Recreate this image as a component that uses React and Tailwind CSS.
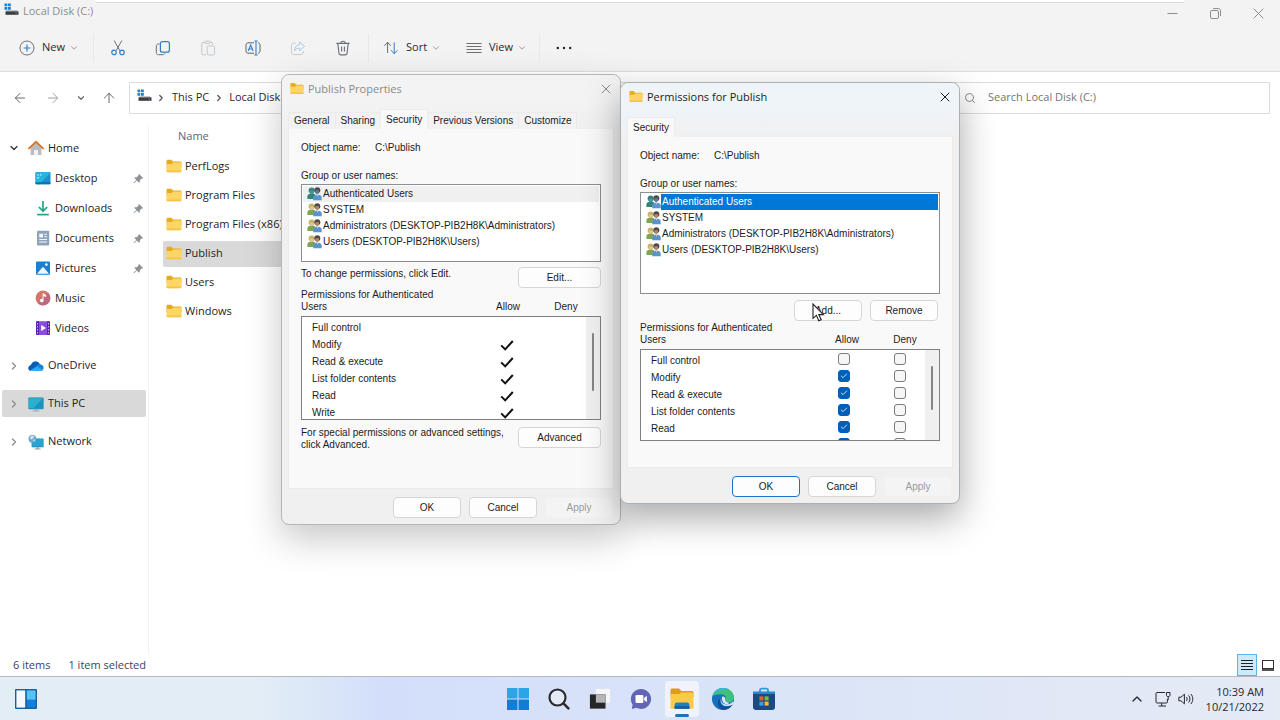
import { useState } from "react";
import clsx from "clsx";
import { ArrowLeft, ArrowRight, ArrowUp, Check, ChevronDown, ChevronRight, ChevronUp, Search, X } from "lucide-react";

const quickAccess = [
    { name: 'Desktop', icon: 'desktop', pinned: true },
    { name: 'Downloads', icon: 'downloads', pinned: true },
    { name: 'Documents', icon: 'documents', pinned: true },
    { name: 'Pictures', icon: 'pictures', pinned: true },
    { name: 'Music', icon: 'music', pinned: false },
    { name: 'Videos', icon: 'videos', pinned: false },
];

const places = [
    { name: 'OneDrive', icon: 'onedrive' },
    { name: 'This PC', icon: 'pc', selected: true },
    { name: 'Network', icon: 'network' },
];

const folders = ['PerfLogs', 'Program Files', 'Program Files (x86)', 'Publish', 'Users', 'Windows'];

const principals = [
    'Authenticated Users',
    'SYSTEM',
    'Administrators (DESKTOP-PIB2H8K\\Administrators)',
    'Users (DESKTOP-PIB2H8K\\Users)',
];

const permissions = ['Full control', 'Modify', 'Read & execute', 'List folder contents', 'Read', 'Write'];

const FolderIcon = ({ className }) => (
    <svg className={className} viewBox="0 0 16 14" fill="none">
        <path d="M0.5 2.2C0.5 1.3 1 0.8 1.9 0.8H5.3L7 2.6H14.2C15 2.6 15.5 3.1 15.5 3.9V8H0.5Z" fill="#e5ac22" />
        <path d="M0.5 5H5.6L7.4 3.6H14.3C15.1 3.6 15.5 4.1 15.5 4.8V12.1C15.5 12.8 15.1 13.2 14.4 13.2H1.6C0.9 13.2 0.5 12.8 0.5 12.1Z" fill="#fdd664" />
        <path d="M0.5 11.5V12.1C0.5 12.8 0.9 13.2 1.6 13.2H14.4C15.1 13.2 15.5 12.8 15.5 12.1V11.5Z" fill="#f6c445" />
    </svg>
);

const DriveIcon = ({ className }) => (
    <svg className={className} viewBox="0 0 15 13">
        <path d="M0.5 0.5H3.3V3.3H0.5ZM4 0.5H6.8V3.3H4ZM0.5 4H3.3V6.8H0.5ZM4 4H6.8V6.8H4Z" fill="#1583d8" />
        <path d="M2 8L3 7.4H13L14.2 8.6H2Z" fill="#8b8f93" />
        <rect x="1.5" y="8.4" width="13" height="3.4" fill="#3b3d40" />
        <rect x="11.5" y="9.6" width="1.6" height="1" fill="#7d8a80" />
    </svg>
);

const PinIcon = ({ className }) => (
    <svg className={className} viewBox="0 0 12 12">
        <path d="M6.6 1L11 5.4L10 6.2L9.3 6L7.5 7.9L7.4 9.9L6.6 10.5L4.2 8.1L1.2 11.1L0.6 10.7L3.6 7.5L1.4 5.3L2.1 4.6L4.1 4.5L6 2.7L5.8 1.8Z" fill="#8e9297" />
    </svg>
);

const UsersIcon = ({ className, teal }) => (
    <svg className={className} viewBox="0 0 15 14">
        <circle cx="4.6" cy="3.4" r="3" fill={teal ? '#3d7f86' : '#c9b268'} />
        <path d="M3.2 3.8H6.6V7H3.2Z" fill={teal ? '#4f9a9a' : '#e0c8a0'} />
        <path d="M0.4 12V9.6C0.4 7.7 1.6 6.7 3.8 6.7H5.8C7.8 6.7 8.8 8 8.8 9.6V12Z" fill={teal ? '#2f8577' : '#7da650'} />
        <circle cx="10.3" cy="3.2" r="3" fill="#4c4a4d" />
        <path d="M8.3 3.2H12L11.7 6.2L10.3 7.6L8.7 6.4Z" fill={teal ? '#5f7f96' : '#b98b64'} />
        <path d="M6.2 13.3V10.8C6.2 8.8 7.5 7.7 9.3 7.7H11.5C13.6 7.7 14.7 9 14.7 10.8V13.3Z" fill="#5b93cb" />
        <path d="M9.4 7.7H11.4L10.4 9.6Z" fill="#bcd5ee" />
    </svg>
);

const PlaceIcon = ({ kind, className }) => {
    const art = {
        home: (
            <>
                <path d="M2.6 7L8 2.6L13.4 7V15H9.8V10H6.4V15H2.6Z" fill="#b9bcc0" />
                <path d="M6.4 10H9.8V15H6.4Z" fill="#f4f4f4" />
                <path d="M1 8.4L8 1.8L15 8.4" fill="none" stroke="#d9772e" strokeWidth="1.9" strokeLinecap="round" strokeLinejoin="round" />
            </>
        ),
        desktop: (
            <>
                <rect x="0.5" y="2" width="15" height="12.2" rx="1" fill="#1b8fd0" />
                <path d="M0.5 3Q0.5 2 1.5 2H14.5Q15.5 2 15.5 3L4 14.2H1.5Q0.5 14.2 0.5 13.2Z" fill="#2ab4dc" />
                <path d="M2.4 4.2H3.8V5.6H2.4ZM2.4 7H3.8V8.4H2.4ZM5 4.2H6.4V5.6H5Z" fill="#d7f4fb" />
                <path d="M0.5 12.2H15.5V13.2Q15.5 14.2 14.5 14.2H1.5Q0.5 14.2 0.5 13.2Z" fill="#126da8" />
            </>
        ),
        downloads: (
            <>
                <path d="M8 1V11M3.8 7L8 11.2L12.2 7" fill="none" stroke="#22a686" strokeWidth="1.7" />
                <path d="M2.2 14.6H13.8" stroke="#22a686" strokeWidth="1.7" />
            </>
        ),
        documents: (
            <>
                <rect x="2" y="0.8" width="12.2" height="14.6" rx="1" fill="#8ea3ba" />
                <path d="M4.2 3.8H8V7.4H4.2ZM9.2 3.8H12V4.8H9.2ZM9.2 6.2H12V7.2H9.2ZM4.2 9H12V10H4.2ZM4.2 11.6H12V12.6H4.2Z" fill="#f3f7fb" />
            </>
        ),
        pictures: (
            <>
                <rect x="1" y="1.4" width="14" height="13.4" rx="1" fill="#1c7fd0" />
                <path d="M2 13.8L7.5 7.2Q8 6.7 8.5 7.2L14 13.8Z" fill="#f2f8fe" />
                <circle cx="11.4" cy="4.6" r="1.3" fill="#f2f8fe" />
            </>
        ),
        music: (
            <>
                <circle cx="8" cy="8" r="7.4" fill="#d5766a" />
                <path d="M15.4 8A7.4 7.4 0 0 1 2.8 13.2L13.2 2.8A7.4 7.4 0 0 1 15.4 8Z" fill="#b5648c" opacity="0.7" />
                <circle cx="6.8" cy="10.6" r="1.8" fill="#fff" />
                <path d="M8 10.6V3.6L10.8 5.2V6.6L8.6 5.6" fill="#fff" stroke="#fff" strokeWidth="0.7" />
            </>
        ),
        videos: (
            <>
                <rect x="1" y="1.2" width="14" height="13.8" rx="1" fill="#8a4be0" />
                <path d="M1 2.2Q1 1.2 2 1.2H4V15H2Q1 15 1 14ZM12 1.2H14Q15 1.2 15 2.2V14Q15 15 14 15H12Z" fill="#5b25b0" />
                <path d="M2 3H3V4.4H2ZM2 6H3V7.4H2ZM2 9H3V10.4H2ZM2 12H3V13.4H2ZM13 3H14V4.4H13ZM13 6H14V7.4H13ZM13 9H14V10.4H13ZM13 12H14V13.4H13Z" fill="#c9a8f5" />
                <path d="M6.2 5L11 8L6.2 11Z" fill="#fff" />
            </>
        ),
        onedrive: (
            <>
                <path d="M3.5 13C1.6 13 0.4 11.8 0.4 10.2C0.4 8.6 1.6 7.4 3 7.2C3.6 4.9 5.4 3.4 7.6 3.4C9.5 3.4 11 4.5 11.8 6.2C14 6.3 15.6 7.8 15.6 9.8C15.6 11.6 14.2 13 12.4 13Z" fill="#1683dc" />
                <path d="M3 7.2C3.6 4.9 5.4 3.4 7.6 3.4C9.5 3.4 11 4.5 11.8 6.2C10 6.2 9.2 7 8.6 7.8L2 12.6C1 12 0.4 11.2 0.4 10.2C0.4 8.6 1.6 7.4 3 7.2Z" fill="#0b5cb5" />
                <path d="M2 12.6L9.4 8.4L14.8 11.9C14.2 12.6 13.4 13 12.4 13H3.5C3 13 2.4 12.9 2 12.6Z" fill="#35a8ee" />
            </>
        ),
        pc: (
            <>
                <rect x="0.4" y="1.6" width="15.2" height="11.6" rx="0.8" fill="#1c86a8" />
                <path d="M1 2.2H15V12.6H1Z" fill="#2bb0d0" />
                <path d="M15 2.2V12.6H5Z" fill="#1993bd" />
                <path d="M6.4 13.2H9.6V14.6H11.4V15.4H4.6V14.6H6.4Z" fill="#9fb2bd" />
            </>
        ),
        network: (
            <>
                <rect x="3.6" y="4.4" width="12" height="8.8" rx="0.6" fill="#1c86b0" />
                <path d="M4.2 5H15V12.6H4.2Z" fill="#29a3d2" />
                <path d="M8.4 13.2H10.8V14.6H12.6V15.4H6.6V14.6H8.4Z" fill="#8ea6b4" />
                <circle cx="4.4" cy="4.8" r="3.9" fill="#6aa8cc" />
                <path d="M2 3.4L4 1.6L6.2 2.6L5 4.6L3 5.4ZM4.6 6L7 5.2L6.4 7.6Z" fill="#d5e9f3" />
            </>
        ),
    };

    return <svg className={className} viewBox="0 0 16 16">{art[kind]}</svg>;
};

const ToolIcon = ({ kind }) => {
    const art = {
        cut: (
            <>
                <path d="M4.2 0.6L9.9 10.8M11.8 0.6L6.1 10.8" stroke="#6b6f74" />
                <circle cx="4" cy="12.4" r="2.2" stroke="#2f7fd0" strokeWidth="1.2" />
                <circle cx="12" cy="12.4" r="2.2" stroke="#2f7fd0" strokeWidth="1.2" />
            </>
        ),
        copy: (
            <>
                <path d="M4.6 4H3.4C2.2 4 1.3 4.9 1.3 6V12.6C1.3 13.8 2.2 14.7 3.4 14.7H7.8C8.8 14.7 9.6 14.2 9.9 13.2" stroke="#6b6f74" />
                <rect x="5.4" y="1.6" width="9" height="10.6" rx="2" stroke="#2f7fd0" strokeWidth="1.2" />
            </>
        ),
        paste: (
            <>
                <path d="M5 2.4H3C2.3 2.4 1.8 2.9 1.8 3.6V13.6C1.8 14.3 2.3 14.8 3 14.8H6M10 2.4H11.4C12.1 2.4 12.6 2.9 12.6 3.6V5" stroke="#c3c5c7" />
                <rect x="5" y="1.2" width="5" height="2.4" rx="1" stroke="#c3c5c7" />
                <rect x="7.2" y="6" width="7.4" height="9" rx="1.2" stroke="#b8cbdc" />
            </>
        ),
        rename: (
            <>
                <path d="M9 2.8H3C1.9 2.8 1 3.7 1 4.8V11.2C1 12.3 1.9 13.2 3 13.2H9M13 2.8C14.2 2.8 15 3.7 15 4.8V11.2C15 12.3 14.2 13.2 13 13.2" stroke="#5f6368" />
                <path d="M11 1V15M9.4 1H12.6M9.4 15H12.6M3.2 11L5.7 5L8.2 11M4.1 9H7.3" stroke="#2f7fd0" strokeWidth="1.1" />
            </>
        ),
        share: (
            <>
                <path d="M6 3H3.6C2.3 3 1.4 3.9 1.4 5.2V12.4C1.4 13.7 2.3 14.6 3.6 14.6H11C12.3 14.6 13.2 13.7 13.2 12.4V11" stroke="#c6cacd" />
                <path d="M9.6 2L14.6 6.4L9.6 10.6V8.2C7 8.2 5.4 9.2 4.4 11C4.6 7.4 6.4 5 9.6 4.6Z" stroke="#a9c9e4" />
            </>
        ),
        trash: (
            <path d="M1.4 3.4H14.6M5.8 3.2C5.8 2 6.7 1.2 8 1.2C9.3 1.2 10.2 2 10.2 3.2M2.8 3.6L4 13.4C4.1 14.3 4.8 14.9 5.7 14.9H10.3C11.2 14.9 11.9 14.3 12 13.4L13.2 3.6M6.6 6.6V11.6M9.4 6.6V11.6" stroke="#6b6f74" strokeWidth="1.1" />
        ),
        sort: (
            <>
                <path d="M4.6 13V2.4M1.4 5.8L4.6 2.2L7.8 5.8" stroke="#6b6f74" />
                <path d="M11.2 2.4V13.4M8 10.2L11.2 13.8L14.4 10.2" stroke="#2f7fd0" />
            </>
        ),
        view: <path d="M0.5 3.5H15.5M0.5 6.5H15.5M0.5 9.5H15.5M0.5 12.5H15.5" stroke="#6b6f74" />,
        add: (
            <>
                <circle cx="8" cy="8" r="7" stroke="#6b6f74" />
                <path d="M8 4.6V11.4M4.6 8H11.4" stroke="#2f7fd0" strokeWidth="1.2" />
            </>
        ),
        more: (
            <>
                <circle cx="1.8" cy="8" r="1.2" fill="#222" />
                <circle cx="8" cy="8" r="1.2" fill="#222" />
                <circle cx="14.2" cy="8" r="1.2" fill="#222" />
            </>
        ),
    };

    return <svg className="size-4 shrink-0" viewBox="0 0 16 16" fill="none">{art[kind]}</svg>;
};

const TitleBar = () => (
    <div className="relative flex h-6 items-start justify-between text-[#8d8d8d]">
        <div className="absolute left-24 right-24 top-0 h-[3px] border-b border-[#dcdcdc] bg-white" />
        <div className="flex items-center gap-1 pl-1 pt-[2px]">
            <DriveIcon className="mb-1 h-[13px] w-[15px]" />
            <span className="text-[11px] leading-[18px]">Local Disk (C:)</span>
        </div>
        <div className="relative flex">
            <button aria-label="Minimize" className="flex h-[27px] w-[43px] items-center justify-center">
                <svg className="size-[11px]" viewBox="0 0 11 11"><path d="M0.5 5.5H10.5" stroke="#8d8d8d" /></svg>
            </button>
            <button aria-label="Restore" className="flex h-[27px] w-[43px] items-center justify-center">
                <svg className="size-[11px]" viewBox="0 0 11 11" fill="none" stroke="#8d8d8d">
                    <rect x="0.5" y="2.5" width="8" height="8" rx="1.5" />
                    <path d="M3 0.6H8.4C9.7 0.6 10.5 1.4 10.5 2.6V8" />
                </svg>
            </button>
            <button aria-label="Close" className="flex h-[27px] w-[43px] items-center justify-center">
                <svg className="size-[11px]" viewBox="0 0 11 11"><path d="M0.7 0.7L10.3 10.3M10.3 0.7L0.7 10.3" stroke="#8d8d8d" /></svg>
            </button>
        </div>
    </div>
);

const MenuButton = ({ icon, label, className }) => (
    <button className={clsx('flex items-center text-[11px] text-[#2a2a2a]', className)}>
        <ToolIcon kind={icon} />
        <span className="ml-[7px] mr-1">{label}</span>
        <ChevronDown className="size-[10px] text-[#8a8a8a]" />
    </button>
);

const Toolbar = () => (
    <div className="flex h-12 items-center border-b border-[#dedede]">
        <MenuButton icon="add" label="New" className="w-[93px] pl-[19px]" />
        <div className="mr-px h-7 w-px bg-[#e8e8e8]" />
        {
            ['cut', 'copy', 'paste', 'rename', 'share', 'trash'].map(kind => (
                <button key={kind} aria-label={kind} className="flex w-[45px] justify-center">
                    <ToolIcon kind={kind} />
                </button>
            ))
        }
        <div className="ml-[3px] h-7 w-px bg-[#e8e8e8]" />
        <MenuButton icon="sort" label="Sort" className="w-[83px] pl-[14px]" />
        <MenuButton icon="view" label="View" className="w-[87px] pl-[14px]" />
        <div className="h-7 w-px bg-[#e8e8e8]" />
        <button aria-label="more" className="ml-4">
            <ToolIcon kind="more" />
        </button>
    </div>
);

const AddressRow = () => (
    <div className="flex h-[51px] items-center bg-white pr-[10px]">
        <div className="flex w-[129px] items-center pl-3 text-[#6a6a6a]">
            <button aria-label="Back" className="mr-[17px]"><ArrowLeft className="size-4" strokeWidth={1.5} /></button>
            <button aria-label="Forward" className="mr-[15px] text-[#a3a3a3]"><ArrowRight className="size-4" strokeWidth={1.5} /></button>
            <button aria-label="Recent" className="mr-[15px]"><ChevronDown className="size-[10px]" strokeWidth={3} /></button>
            <button aria-label="Up"><ArrowUp className="size-4" strokeWidth={1.5} /></button>
        </div>
        <div className="flex h-8 flex-1 items-center border border-[#dddddd] pl-[7px] text-[11px] text-[#2a2a2a]">
            <DriveIcon className="mb-1 h-[13px] w-[15px]" />
            <ChevronRight className="mx-1 size-[10px] text-[#555]" strokeWidth={3} />
            <a href="#pc" className="ml-[2px]">This PC</a>
            <ChevronRight className="mx-[5px] size-[10px] text-[#555]" strokeWidth={3} />
            <a href="#c">Local Disk (C:)</a>
        </div>
        <label className="ml-2 flex h-8 w-[320px] items-center border border-[#dddddd] pl-[13px]">
            <Search className="size-3 text-[#8a8a8a]" />
            <input type="search" aria-label="Search Local Disk (C:)" placeholder="Search Local Disk (C:)" className="ml-3 flex-1 bg-transparent text-[11px] outline-none placeholder:text-[#757575]" />
        </label>
    </div>
);

const Sidebar = () => (
    <nav className="mt-[2px] w-[149px] border-r border-[#f2f2f2] pt-2 text-[11px] text-[#1e1e1e]">
        <a href="#home" className="flex h-[30px] items-center pl-2">
            <ChevronDown className="size-3 text-[#333]" strokeWidth={2.5} />
            <PlaceIcon kind="home" className="ml-2 size-4" />
            <span className="ml-1">Home</span>
        </a>
        {
            quickAccess.map(item => (
                <a href={`#${item.icon}`} key={item.name} className="flex h-[30px] items-center pl-[35px] pr-1">
                    <PlaceIcon kind={item.icon} className="size-4" />
                    <span className="ml-1 flex-1">{item.name}</span>
                    {item.pinned && <PinIcon className="size-[11px]" />}
                </a>
            ))
        }
        <div className="mt-[9px] flex flex-col gap-[11px]">
            {
                places.map(item => (
                    <a href={`#${item.icon}`} key={item.name} className={clsx('ml-[2px] mr-[2px] flex h-[27px] items-center rounded-xs pl-[6px]', item.selected && 'bg-[#d9d9d9]')}>
                        <ChevronRight className="size-3 text-[#8a8a8a]" strokeWidth={2.5} />
                        <PlaceIcon kind={item.icon} className="ml-2 size-4" />
                        <span className="ml-1">{item.name}</span>
                    </a>
                ))
            }
        </div>
    </nav>
);

const FileList = () => (
    <div className="flex-1 pl-[14px]">
        <table className="w-[600px] text-left text-[11px] text-[#1e1e1e]">
            <thead>
                <tr>
                    <th className="h-[29px] pb-[3px] pl-[15px] font-normal text-[#5a6480]">Name</th>
                </tr>
            </thead>
            <tbody>
                {
                    folders.map(name => (
                        <tr key={name}>
                            <td className="h-[29px] p-0">
                                <div className={clsx('flex h-[26px] items-center rounded-xs pl-[3px]', name === 'Publish' && 'bg-[#d9d9d9]')}>
                                    <FolderIcon className="mb-[2px] h-[14px] w-4" />
                                    <span className="ml-[3px]">{name}</span>
                                </div>
                            </td>
                        </tr>
                    ))
                }
            </tbody>
        </table>
    </div>
);

const StatusBar = () => (
    <div className="flex h-[22px] items-center pl-[13px] pr-px text-[11px] text-[#3c4460]">
        <span>6 items</span>
        <span className="ml-[18px] flex-1">1 item selected</span>
        <button aria-label="Details" className="flex h-[22px] w-5 items-center justify-center border border-[#5fb4e6] bg-[#cfe9f8]">
            <svg className="h-[10px] w-3" viewBox="0 0 12 10"><path d="M0 0.5H12M0 3.5H12M0 6.5H12M0 9.5H12" stroke="#222" /></svg>
        </button>
        <button aria-label="Large icons" className="flex h-[22px] w-[22px] items-center justify-center">
            <svg className="h-[11px] w-3" viewBox="0 0 12 11" fill="none">
                <rect x="0.5" y="0.5" width="11" height="8" stroke="#333" />
                <path d="M0 10H12" stroke="#555" strokeWidth="2" />
            </svg>
        </button>
    </div>
);

const WindowFrame = ({ title, active, tabs, selectedTab, className, children, footer }) => (
    <section className={clsx('absolute flex w-[340px] flex-col rounded-lg border bg-[#f0f0f0] font-["Liberation_Sans",sans-serif] text-[10px] leading-3 text-[#1c1c1c]', active ? 'border-[#a9b0b6] shadow-[0_14px_36px_rgba(0,0,0,0.34)]' : 'border-[#b5b5b5] shadow-[0_14px_36px_rgba(0,0,0,0.22)]', className)}>
        <header className={clsx('flex h-7 items-center rounded-t-lg pl-2 font-["Open_Sans",sans-serif]', active ? 'bg-[#eff4f9] text-[#1c1c1c]' : 'bg-[#f3f3f3] text-[#8a8a8a]')}>
            <FolderIcon className="mb-[2px] h-[13px] w-[14px]" />
            <h2 className="ml-1 flex-1 text-[11px] leading-4">{title}</h2>
            <button aria-label="Close" className="flex size-7 items-center justify-center">
                <X className="size-4" strokeWidth={1.5} />
            </button>
        </header>
        <div className={clsx('flex h-[26px] items-end px-[6px]', active ? 'bg-linear-to-b from-[#eff4f9] to-[#f0f0f0]' : 'bg-linear-to-b from-[#f3f3f3] to-[#f0f0f0]')}>
            {
                tabs.map(tab => (
                    <button key={tab} className={clsx('-mr-px border border-b-0 px-[5px]', tab === selectedTab ? 'relative h-5 border-[#ececec] bg-[#f9f9f9]' : 'h-[17px] border-[#ebebeb] bg-[#f2f2f2]')}>
                        {tab}
                    </button>
                ))
            }
        </div>
        <div className="mx-[6px] flex-1 border border-t-0 border-[#ebebeb] bg-[#f9f9f9] px-3 pb-[26px] pt-[13px]">
            {children}
        </div>
        <footer className="flex justify-end gap-2 pb-[6px] pr-[7px] pt-2">{footer}</footer>
    </section>
);

const DialogButton = ({ children, wide, primary, disabled }) => (
    <button
        disabled={disabled}
        className={clsx('h-[21px] shrink-0 rounded-sm border', wide ? 'w-[83px]' : 'w-[68px]', primary ? 'border-[#1a76c4] bg-[#fdfdfd]' : disabled ? 'border-[#f0f0f0] bg-[#f4f4f4] text-[#9b9b9b]' : 'border-[#d6d6d6] bg-[#fdfdfd]')}
    >
        {children}
    </button>
);

const ObjectName = () => (
    <div className="flex">
        <span className="w-[74px]">Object name:</span>
        <span>C:\Publish</span>
    </div>
);

const PrincipalList = ({ active, className }) => (
    <>
        <div className="mt-4">Group or user names:</div>
        <ul className={clsx('mt-[2px] border border-[#8a8f94] bg-white px-px pt-px', className)}>
            {
                principals.map((name, index) => (
                    <li key={name} className={clsx('flex h-4 items-center pl-1', index === 0 && !active && 'bg-[#f0f0f0]')}>
                        <UsersIcon className="h-[14px] w-[15px]" teal={index === 0} />
                        <span className={clsx('h-4 flex-1 pl-px leading-4', index === 0 && active && 'bg-[#0078d7] text-white')}>{name}</span>
                    </li>
                ))
            }
        </ul>
    </>
);

const PermissionHeader = () => (
    <div className="mt-px flex items-end">
        <span className="w-[178px] pr-8">Permissions for Authenticated Users</span>
        <span className="w-[58px] text-center">Allow</span>
        <span className="w-[58px] text-center">Deny</span>
    </div>
);

const PermissionBox = ({ className, thumb, children }) => (
    <div className={clsx('mt-[3px] flex overflow-hidden border border-[#7d8185] bg-white', className)}>
        <table className="h-fit w-[284px] table-fixed">
            <tbody>
                <tr className="h-[2px]">
                    <td className="w-[175px]" />
                    <td className="w-14" />
                    <td />
                </tr>
                {children}
            </tbody>
        </table>
        <div className="flex flex-1 justify-center bg-[#f0f0f0] pt-4">
            <div className={clsx('w-[2px] rounded-full bg-[#858585]', thumb)} />
        </div>
    </div>
);

const PermCheckbox = ({ row, column, defaultChecked }) => {
    const [checked, setChecked] = useState(defaultChecked);

    return (
        <label className="relative mx-auto block size-3">
            <input
                type="checkbox"
                aria-label={`${row} ${column}`}
                checked={checked}
                onChange={() => setChecked(!checked)}
                className="block size-3 appearance-none rounded-[3px] border border-[#7b7b7b] bg-[#f6f6f6] checked:border-[#005fb8] checked:bg-[#005fb8]"
            />
            {checked && <Check className="pointer-events-none absolute left-[2px] top-[2px] size-2 text-[#cfe2f4]" strokeWidth={3} />}
        </label>
    );
};

const PropertiesDialog = () => (
    <WindowFrame
        title="Publish Properties"
        tabs={['General', 'Sharing', 'Security', 'Previous Versions', 'Customize']}
        selectedTab="Security"
        className="left-[281px] top-[74px]"
        footer={
            <>
                <DialogButton>OK</DialogButton>
                <DialogButton>Cancel</DialogButton>
                <DialogButton disabled>Apply</DialogButton>
            </>
        }
    >
        <ObjectName />
        <PrincipalList className="h-[78px]" />
        <div className="mt-[5px] flex justify-between">
            <span className="pt-px">To change permissions, click Edit.</span>
            <DialogButton wide>Edit...</DialogButton>
        </div>
        <PermissionHeader />
        <PermissionBox className="h-[104px]" thumb="h-[58px]">
            {
                permissions.map((name, index) => (
                    <tr key={name} className="h-[17px]">
                        <td className="p-0 pl-[10px]">{name}</td>
                        <td className="p-0 pl-[3px]">
                            {index > 0 && (
                                <svg className="mx-auto mt-[2px] h-[11px] w-[14px]" viewBox="0 0 14 11" fill="none">
                                    <path d="M1.2 5.4L5.2 9.4L12.8 1" stroke="#111" strokeWidth="2" />
                                </svg>
                            )}
                        </td>
                        <td className="p-0" />
                    </tr>
                ))
            }
        </PermissionBox>
        <div className="mt-[7px] flex justify-between pb-[11px]">
            <span className="w-[206px]">For special permissions or advanced settings, click Advanced.</span>
            <DialogButton wide>Advanced</DialogButton>
        </div>
    </WindowFrame>
);

const PermissionsDialog = () => (
    <WindowFrame
        title="Permissions for Publish"
        active
        tabs={['Security']}
        selectedTab="Security"
        className="left-[620px] top-[82px]"
        footer={
            <>
                <DialogButton primary>OK</DialogButton>
                <DialogButton>Cancel</DialogButton>
                <DialogButton disabled>Apply</DialogButton>
            </>
        }
    >
        <ObjectName />
        <PrincipalList active className="h-[102px]" />
        <div className="mt-[6px] flex justify-end gap-2 pr-[2px]">
            <DialogButton>Add...</DialogButton>
            <DialogButton>Remove</DialogButton>
        </div>
        <PermissionHeader />
        <PermissionBox className="h-[92px]" thumb="h-[44px]">
            {
                permissions.map((name, index) => (
                    <tr key={name} className="h-[17px]">
                        <td className="p-0 pl-[10px]">{index < 5 && name}</td>
                        <td className="p-0 pb-[3px]"><PermCheckbox row={name} column="Allow" defaultChecked={index > 0} /></td>
                        <td className="p-0 pb-[3px] pl-[3px]"><PermCheckbox row={name} column="Deny" defaultChecked={false} /></td>
                    </tr>
                ))
            }
        </PermissionBox>
    </WindowFrame>
);

const Cursor = () => (
    <svg className="pointer-events-none absolute left-[812px] top-[303px] h-[19px] w-[13px]" viewBox="0 0 13 19">
        <path d="M1 1V15.4L4.4 12.4L6.8 17.8L9.2 16.8L6.8 11.6H11.4Z" fill="#fff" stroke="#222" strokeWidth="1.1" />
    </svg>
);

const taskIcons = {
    Start: (
        <>
            <path d="M1 1H11.5V11.5H1ZM12.5 1H23V11.5H12.5Z" fill="#2aa5e8" />
            <path d="M1 12.5H11.5V23H1ZM12.5 12.5H23V23H12.5Z" fill="#0f7fd3" />
        </>
    ),
    Search: (
        <>
            <circle cx="10.5" cy="10.5" r="8" fill="#e4eaf6" stroke="#2b2b2e" strokeWidth="2.2" />
            <path d="M16.4 16.4L21.4 21.4" stroke="#2b2b2e" strokeWidth="2.6" strokeLinecap="round" />
        </>
    ),
    'Task view': (
        <>
            <rect x="7.5" y="1" width="15.5" height="15" fill="#f6f6f6" />
            <rect x="1" y="7" width="17" height="15.5" fill="#262729" />
            <path d="M7.5 7H18V16H7.5Z" fill="#b5b6b8" />
        </>
    ),
    Chat: (
        <>
            <path d="M12 1.2C18 1.2 23 6 23 12C23 18 18 22.8 12 22.8C10.2 22.8 8.5 22.4 7 21.6L2 22.8L2.8 18C1.6 16.2 1 14.2 1 12C1 6 6 1.2 12 1.2Z" fill="#6264b5" />
            <rect x="6" y="7.6" width="8.6" height="8.8" rx="1.4" fill="#fff" />
            <path d="M15.4 10.8L18.4 8.4V15.6L15.4 13.2Z" fill="#fff" />
        </>
    ),
    'File Explorer': (
        <>
            <path d="M0.5 3Q0.5 1.6 2 1.6H9L11.4 4H22Q23.5 4 23.5 5.5V10H0.5Z" fill="#dd9c1c" />
            <path d="M0.5 7H9.4L11.4 5.4H22Q23.5 5.4 23.5 7V21.8H0.5Z" fill="#fccb45" />
            <path d="M4.6 21.8V18Q4.6 15.6 7 15.6H17Q19.4 15.6 19.4 18V21.8Z" fill="#1c7fc9" />
            <path d="M4.6 19H19.4V21.8H4.6Z" fill="#1262a3" />
        </>
    ),
    Edge: (
        <>
            <circle cx="12" cy="12" r="11" fill="#1670bd" />
            <path d="M1.4 9.6C2.4 4.6 6.6 1 12 1C18.4 1 23 5.6 23 10.6C23 13.6 20.8 15.6 18 15.6C15.6 15.6 14 14.6 14.6 13.4C16.4 10 13.4 7.2 9.8 7.2C6 7.2 3 8 1.4 9.6Z" fill="#3fc07c" />
            <path d="M1.4 9.6C2.4 4.6 6.6 1 12 1C14 1 16 1.5 17.6 2.4C12 1.8 4 4 1.4 9.6Z" fill="#35b8dc" />
            <path d="M9.4 11.4C8 15 10.4 19.6 15.4 19.6C18 19.6 20 19 21.4 17.8C19.4 21.2 16 23 12.4 23C8.4 22 6.4 18.4 6.8 15.4C7 13.4 8 12 9.4 11.4Z" fill="#134f96" />
            <path d="M10.6 10.4C9 13.6 11 17.4 15.4 17.4C18 17.4 20.4 16.6 22 14.6L22.8 16.4C20.6 18.6 17 19.2 15 19C10.6 18.6 8.2 14 10.6 10.4Z" fill="#e2e5f4" />
            <path d="M11.2 9.6C13 9.2 15 10.6 14.4 13.6C14.4 15 16 16 18.6 15.8L16 17.4C12 17 10.4 13.4 11.2 9.6Z" fill="#e2e5f4" />
        </>
    ),
    Store: (
        <>
            <path d="M8 5V3.2Q8 1.6 9.6 1.6H14.4Q16 1.6 16 3.2V5" fill="none" stroke="#2f9be0" strokeWidth="1.8" />
            <path d="M1 4.8H23V20Q23 23 20 23H4Q1 23 1 20Z" fill="#1b4a80" />
            <path d="M1 4.8H23V7H1Z" fill="#2a86cf" />
            <path d="M7.4 9.4H11.4V13.4H7.4Z" fill="#ee5a33" />
            <path d="M12.6 9.4H16.6V13.4H12.6Z" fill="#7dbb2f" />
            <path d="M7.4 14.6H11.4V18.6H7.4Z" fill="#2fa3e8" />
            <path d="M12.6 14.6H16.6V18.6H12.6Z" fill="#fcba2d" />
        </>
    ),
};

const Taskbar = () => (
    <div className="flex h-11 items-center border-t border-[#b3b8c4] bg-linear-to-r from-[#e3edf6] from-20% via-[#d3dffa] via-30% to-[#e5ebf5]">
        <div className="flex-1 pl-[14px]">
            <button aria-label="Widgets" className="block">
                <svg className="h-[22px] w-6" viewBox="0 0 24 22">
                    <rect x="1" y="1" width="22" height="20" rx="1" fill="#1a5f9f" />
                    <rect x="2.4" y="2.4" width="8.8" height="17.2" fill="#f6f9fc" />
                    <rect x="12.8" y="2.4" width="8.8" height="9.4" fill="#55c3f5" />
                    <rect x="12.8" y="11.8" width="8.8" height="7.8" fill="#1280dc" />
                </svg>
            </button>
        </div>
        <div className="flex gap-[7px] pl-1">
            {
                Object.entries(taskIcons).map(([name, art]) => (
                    <button key={name} aria-label={name} className={clsx('relative flex h-9 w-[34px] items-center justify-center rounded-sm', name === 'File Explorer' && 'bg-[#f1f3fc]')}>
                        <svg className={name === 'Chat' || name === 'Task view' ? 'size-[22px]' : 'size-6'} viewBox="0 0 24 24">{art}</svg>
                        {name === 'File Explorer' && <span className="absolute bottom-0 h-[3px] w-[14px] rounded-full bg-[#1c72bd]" />}
                    </button>
                ))
            }
        </div>
        <div className="flex flex-1 items-center justify-end pr-4 text-[#26282c]">
            <button aria-label="Hidden icons"><ChevronUp className="size-4" strokeWidth={2} /></button>
            <svg className="ml-[10px] size-4" viewBox="0 0 16 16" fill="none" stroke="#26282c">
                <path d="M10 1.5H2C1.4 1.5 1 1.9 1 2.5V11C1 11.6 1.4 12 2 12H11.4C12 12 12.4 11.6 12.4 11V8M6.7 12V15M3.6 15H11" />
                <path d="M11.5 1.5H15V4.2C15 5 14.4 5.6 13.2 5.6C12 5.6 11.5 5 11.5 4.2ZM13.2 5.6V9" />
            </svg>
            <svg className="ml-[7px] size-4" viewBox="0 0 16 16" fill="none" stroke="#26282c">
                <path d="M0.8 6.2V9.8H3L6.4 12.8V3.2L3 6.2Z" />
                <path d="M8.4 6C9.4 7 9.4 9 8.4 10M10.6 4.4C12.4 6.4 12.4 9.6 10.6 11.6M12.8 3C15.4 5.6 15.4 10.4 12.8 13" />
            </svg>
            <div className="ml-3 text-right text-[11px] leading-[15px]">
                <div>10:39 AM</div>
                <div>10/21/2022</div>
            </div>
        </div>
    </div>
);

const App = () => (
    <div className='relative flex min-h-screen flex-col overflow-hidden bg-white font-["Open_Sans",sans-serif]'>
        <div className="bg-[#f3f3f3]">
            <TitleBar />
            <Toolbar />
        </div>
        <AddressRow />
        <div className="flex flex-1">
            <Sidebar />
            <FileList />
        </div>
        <StatusBar />
        <Taskbar />
        <PropertiesDialog />
        <PermissionsDialog />
        <Cursor />
    </div>
);

export default App;
